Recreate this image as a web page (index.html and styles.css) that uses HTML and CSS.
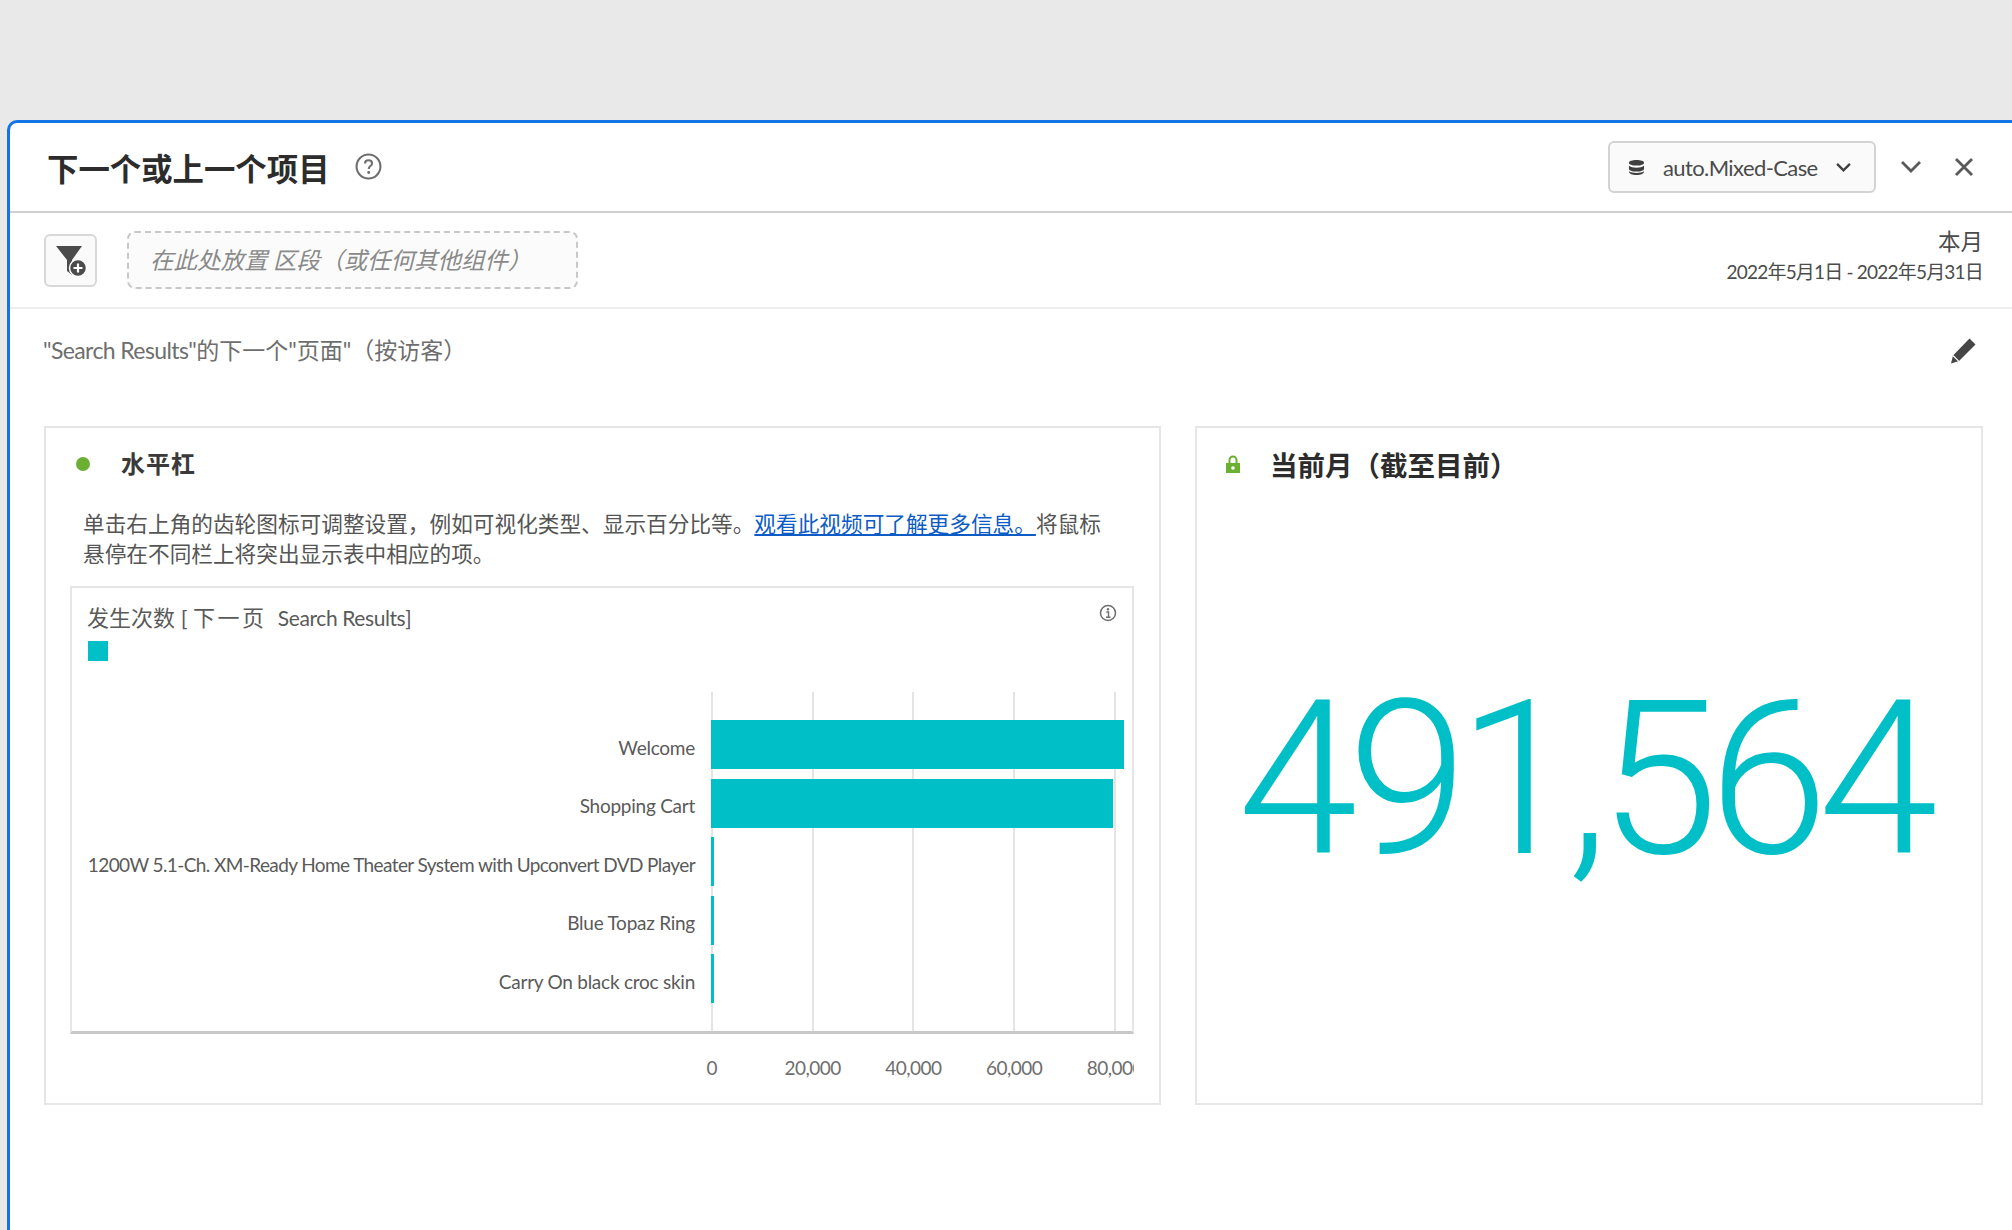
FILE: index.html
```html
<!DOCTYPE html>
<html lang="zh-CN">
<head>
    <meta charset="UTF-8">
    <meta name="viewport" content="width=device-width, initial-scale=1.0">
    <title>下一个或上一个项目</title>
    <link rel="stylesheet" href="styles.css">
</head>
<body>
    <div class="panel">
        <div class="panel-header">
            <h1>下一个或上一个项目</h1>
            <svg class="help-icon" viewBox="0 0 26 26">
                <circle cx="13" cy="13" r="11.5" fill="none" stroke="#6e6e6e" stroke-width="2"/>
                <path d="M9.6 10.2c0-2 1.5-3.2 3.4-3.2s3.4 1.2 3.4 3c0 2.6-3.2 2.6-3.2 5.4" fill="none" stroke="#6e6e6e" stroke-width="2"/>
                <circle cx="13.2" cy="18.8" r="1.4" fill="#6e6e6e"/>
            </svg>
            <div class="header-right">
                <div class="source-select">
                    <svg class="db-icon" viewBox="0 0 18 18">
                        <path d="M1 4c0-2 3.6-3 8-3s8 1 8 3-3.600 3-8 3-8-1-8-3zM1 7.200c1.500 1.400 4.600 2 8 2s6.500-.6 8-2v3c0 2-3.600 3-8 3s-8-1-8-3zM1 13c1.500 1.200 4.600 1.800 8 1.800s6.500-.6 8-1.800c0 2.800-3.600 4-8 4s-8-1.200-8-4z" fill="#3f3f3f"/>
                    </svg>
                    <span class="source-name">auto.Mixed-Case</span>
                    <svg class="chevron small" viewBox="0 0 18 12"><path d="M2 2l7 7 7-7" fill="none" stroke="#3f3f3f" stroke-width="2.600"/></svg>
                </div>
                <svg class="chevron" viewBox="0 0 22 14"><path d="M2 2l9 9 9-9" fill="none" stroke="#5a5a5a" stroke-width="2.800"/></svg>
                <svg class="close-icon" viewBox="0 0 20 20"><path d="M2 2l16 16M18 2L2 18" fill="none" stroke="#5a5a5a" stroke-width="2.800"/></svg>
            </div>
        </div>

        <div class="toolbar">
            <div class="filter-btn">
                <svg viewBox="0 0 30 34" class="filter-icon">
                    <path d="M0 3h26l-10 14v15l-5-4V17z" fill="#4b4b4b"/>
                    <circle cx="22" cy="25" r="8.500" fill="#4b4b4b" stroke="#fafafa" stroke-width="1.500"/>
                    <path d="M22 20.500v9M17.500 25h9" stroke="#fff" stroke-width="2.200"/>
                </svg>
            </div>
            <div class="drop-zone">在此处放置 区段（或任何其他组件）</div>
            <div class="date-range">
                <div class="date-name">本月</div>
                <div>2022年5月1日 - 2022年5月31日</div>
            </div>
        </div>

        <div class="subtitle-row">
            <span class="subtitle"><span class="latin">"Search Results"</span>的下一个"页面"（按访客）</span>
            <svg class="pencil" viewBox="0 0 28 28">
                <path d="M19.500 2.500l6 6L9 25l-8 2.500L3 19.500z" fill="#464646"/>
                <path d="M3 19.500l5.800 5.800" stroke="#fff" stroke-width="1.200"/>
            </svg>
        </div>

        <div class="cards">
            <div class="card card-chart">
                <div class="card-title">
                    <span class="status-dot"></span>
                    <h2>水平杠</h2>
                </div>
                <p class="help-text">单击右上角的齿轮图标可调整设置，例如可视化类型、显示百分比等。<a href="#">观看此视频可了解更多信息。</a>将鼠标悬停在不同栏上将突出显示表中相应的项。</p>
                <div class="chart">
                    <svg class="info-icon" viewBox="0 0 18 18">
                        <circle cx="9" cy="9" r="7.500" fill="none" stroke="#6e6e6e" stroke-width="1.500"/>
                        <circle cx="9" cy="5.300" r="1.200" fill="#6e6e6e"/>
                        <path d="M7.300 8h2.200v5M7 13.300h4.500" fill="none" stroke="#6e6e6e" stroke-width="1.400"/>
                    </svg>
                    <div class="chart-title">发生次数 [ <span class="page-word">下一页</span>&nbsp; <span class="latin">Search Results]</span></div>
                    <div class="legend-swatch"></div>
                    <div class="plot">
                        <div class="row"><div class="label">Welcome</div><div class="bar" style="width: 413px"></div></div>
                        <div class="row"><div class="label">Shopping Cart</div><div class="bar" style="width: 402px"></div></div>
                        <div class="row"><div class="label label-long">1200W 5.1-Ch. XM-Ready Home Theater System with Upconvert DVD Player</div><div class="bar" style="width: 3px"></div></div>
                        <div class="row"><div class="label">Blue Topaz Ring</div><div class="bar" style="width: 3px"></div></div>
                        <div class="row"><div class="label">Carry On black croc skin</div><div class="bar" style="width: 3px"></div></div>
                    </div>
                    <div class="axis">
                        <span>0</span><span>20,000</span><span>40,000</span><span>60,000</span><span>80,000</span>
                    </div>
                </div>
            </div>

            <div class="card card-metric">
                <div class="card-title">
                    <svg class="lock" viewBox="0 0 14 18">
                        <path d="M3.500 8V5a3.500 3.500 0 0 1 7 0v3" fill="none" stroke="#6cb033" stroke-width="2"/>
                        <path d="M0 8h14v10H0z" fill="#6cb033"/>
                        <circle cx="7" cy="13" r="1.800" fill="#fff"/>
                    </svg>
                    <h2>当前月（截至目前）</h2>
                </div>
                <div class="metric">491,564</div>
            </div>
        </div>
    </div>
</body>
</html>
```

FILE: styles.css
```css
:root {
    --teal: #00bfc7;
    --line: #e6e6e6;
    --text: #505050;
}

* {
    margin: 0;
    padding: 0;
    box-sizing: border-box;
}

body {
    font-family: 'Lato', 'Noto Sans CJK SC', sans-serif;
    background: #e9e9e9;
    color: var(--text);
    height: 1230px;
    overflow: hidden;
    padding: 120px 0 0 7px;
}

.panel {
    height: 1110px;
    background: #fff;
    border-top: 3px solid #1473e6;
    border-left: 3px solid #1473e6;
    border-top-left-radius: 10px;
}

.panel-header {
    height: 90px;
    display: flex;
    align-items: center;
    padding: 0 38px 0 37px;
    border-bottom: 2px solid #d0d0d0;
}

.panel-header h1 {
    font-size: 31.400px;
    font-weight: 700;
    color: #2c2c2c;
}

.help-icon {
    width: 27px;
    height: 27px;
    margin-left: 25px;
    margin-top: -2px;
}

.header-right {
    margin-left: auto;
    display: flex;
    align-items: center;
}

.source-select {
    width: 268px;
    height: 52px;
    display: flex;
    align-items: center;
    padding: 0 22px 0 18px;
    background: #fafafa;
    border: 2px solid #d3d3d3;
    border-radius: 6px;
}

.db-icon {
    width: 17px;
    height: 17px;
}

.source-name {
    font-size: 22px;
    letter-spacing: -0.6px;
    margin-left: 18px;
    color: #4b4b4b;
}

.chevron {
    width: 22px;
    height: 14px;
    margin-left: 24px;
}

.chevron.small {
    width: 17px;
    height: 11px;
    margin-left: auto;
}

.close-icon {
    width: 20px;
    height: 20px;
    margin-left: 32px;
}

.toolbar {
    height: 96px;
    display: flex;
    align-items: center;
    padding: 0 29px 0 34px;
    border-bottom: 2px solid #eeeeee;
}

.filter-btn {
    width: 53px;
    height: 53px;
    display: flex;
    align-items: center;
    justify-content: center;
    background: #fafafa;
    border: 2px solid #d8d8d8;
    border-radius: 6px;
}

.filter-icon {
    width: 30px;
    height: 34px;
}

.drop-zone {
    width: 451px;
    height: 58px;
    margin-left: 30px;
    padding: 0 0 2px 21px;
    display: flex;
    align-items: center;
    font-size: 23.500px;
    font-style: italic;
    color: #8a8a8a;
    background: #fbfbfb;
    border: 2px dashed #c8c8c8;
    border-radius: 8px;
}

.date-range {
    margin-left: auto;
    margin-top: -6px;
    text-align: right;
    font-size: 19px;
    letter-spacing: -0.8px;
    line-height: 30px;
    color: #4b4b4b;
}

.date-name {
    font-size: 22.500px;
    letter-spacing: 0;
}

.subtitle-row {
    height: 117px;
    display: flex;
    align-items: flex-start;
    justify-content: space-between;
    padding: 25px 34px 0 33px;
}

.subtitle {
    font-size: 23px;
    line-height: 32px;
    color: #6e6e6e;
}

.subtitle .latin {
    letter-spacing: -0.6px;
}

.pencil {
    width: 28px;
    height: 28px;
    margin-top: 2px;
}

.cards {
    display: flex;
    gap: 34px;
    padding: 0 29px 0 34px;
}

.card {
    height: 679px;
    border: 2px solid var(--line);
}

.card-chart {
    width: 1117px;
    padding: 0 24px;
}

.card-metric {
    flex: 1;
    position: relative;
}

.card-title {
    height: 72px;
    display: flex;
    align-items: center;
    padding-left: 6px;
}

.status-dot {
    width: 14px;
    height: 14px;
    border-radius: 50%;
    background: #6cb033;
}

.card-title h2 {
    font-size: 24px;
    font-weight: 700;
    letter-spacing: 1px;
    color: #3a3a3a;
    margin: -3px 0 0 31px;
}

.card-metric .card-title {
    padding-left: 29px;
}

.card-metric .card-title h2 {
    font-size: 27.500px;
    letter-spacing: 0;
    margin: -1px 0 0 30px;
    color: #2c2c2c;
}

.lock {
    width: 14px;
    height: 18px;
}

.help-text {
    font-size: 21.660px;
    line-height: 30px;
    margin: 9px 0 0 13px;
    width: 1025px;
    color: #555;
}

.help-text a {
    color: #0d5bc4;
    text-decoration: underline;
}

.chart {
    position: relative;
    width: 1064px;
    margin-top: 17px;
    height: 448px;
    border: 2px solid var(--line);
    border-bottom: 3px solid #c8c8c8;
}

.chart-title {
    font-size: 22px;
    line-height: 30px;
    padding: 15px 0 0 15px;
    color: #5a5a5a;
}

.chart-title .latin {
    font-size: 21px;
    letter-spacing: -0.4px;
}

.page-word {
    letter-spacing: 2.500px;
}

.legend-swatch {
    width: 20px;
    height: 20px;
    margin: 8px 0 0 16px;
    background: var(--teal);
}

.info-icon {
    position: absolute;
    top: 16px;
    right: 15px;
    width: 18px;
    height: 18px;
}

.plot {
    position: absolute;
    left: 0;
    right: 0;
    top: 104px;
    bottom: 0;
    padding-top: 28px;
    background-image: repeating-linear-gradient(to right, #e4e4e4 0, #e4e4e4 2px, transparent 2px, transparent 100.750px);
    background-position: 639px 0;
    background-size: calc(100% - 639px) 100%;
    background-repeat: no-repeat;
}

.row {
    display: flex;
    align-items: center;
    height: 49px;
    margin-bottom: 9.500px;
}

.label {
    width: 639px;
    flex: none;
    padding: 5px 16px 0 0;
    text-align: right;
    white-space: nowrap;
    font-size: 19px;
    letter-spacing: -0.25px;
    color: #5a5a5a;
}

.label-long {
    letter-spacing: -0.6px;
}

.bar {
    height: 49px;
    background: var(--teal);
}

.axis {
    position: absolute;
    top: 465px;
    left: 0;
    right: -2px;
    height: 30px;
    overflow: hidden;
    display: grid;
    grid-template-columns: repeat(5, 100.750px);
    padding-left: 589.500px;
    font-size: 19px;
    letter-spacing: -0.5px;
    line-height: 30px;
    text-align: center;
    color: #6e6e6e;
}

.metric {
    position: absolute;
    left: -6px;
    right: 6px;
    top: 222px;
    text-align: center;
    font-family: 'Roboto', sans-serif;
    font-size: 216px;
    letter-spacing: -10px;
    line-height: 260px;
    font-weight: 300;
    color: var(--teal);
}
```
